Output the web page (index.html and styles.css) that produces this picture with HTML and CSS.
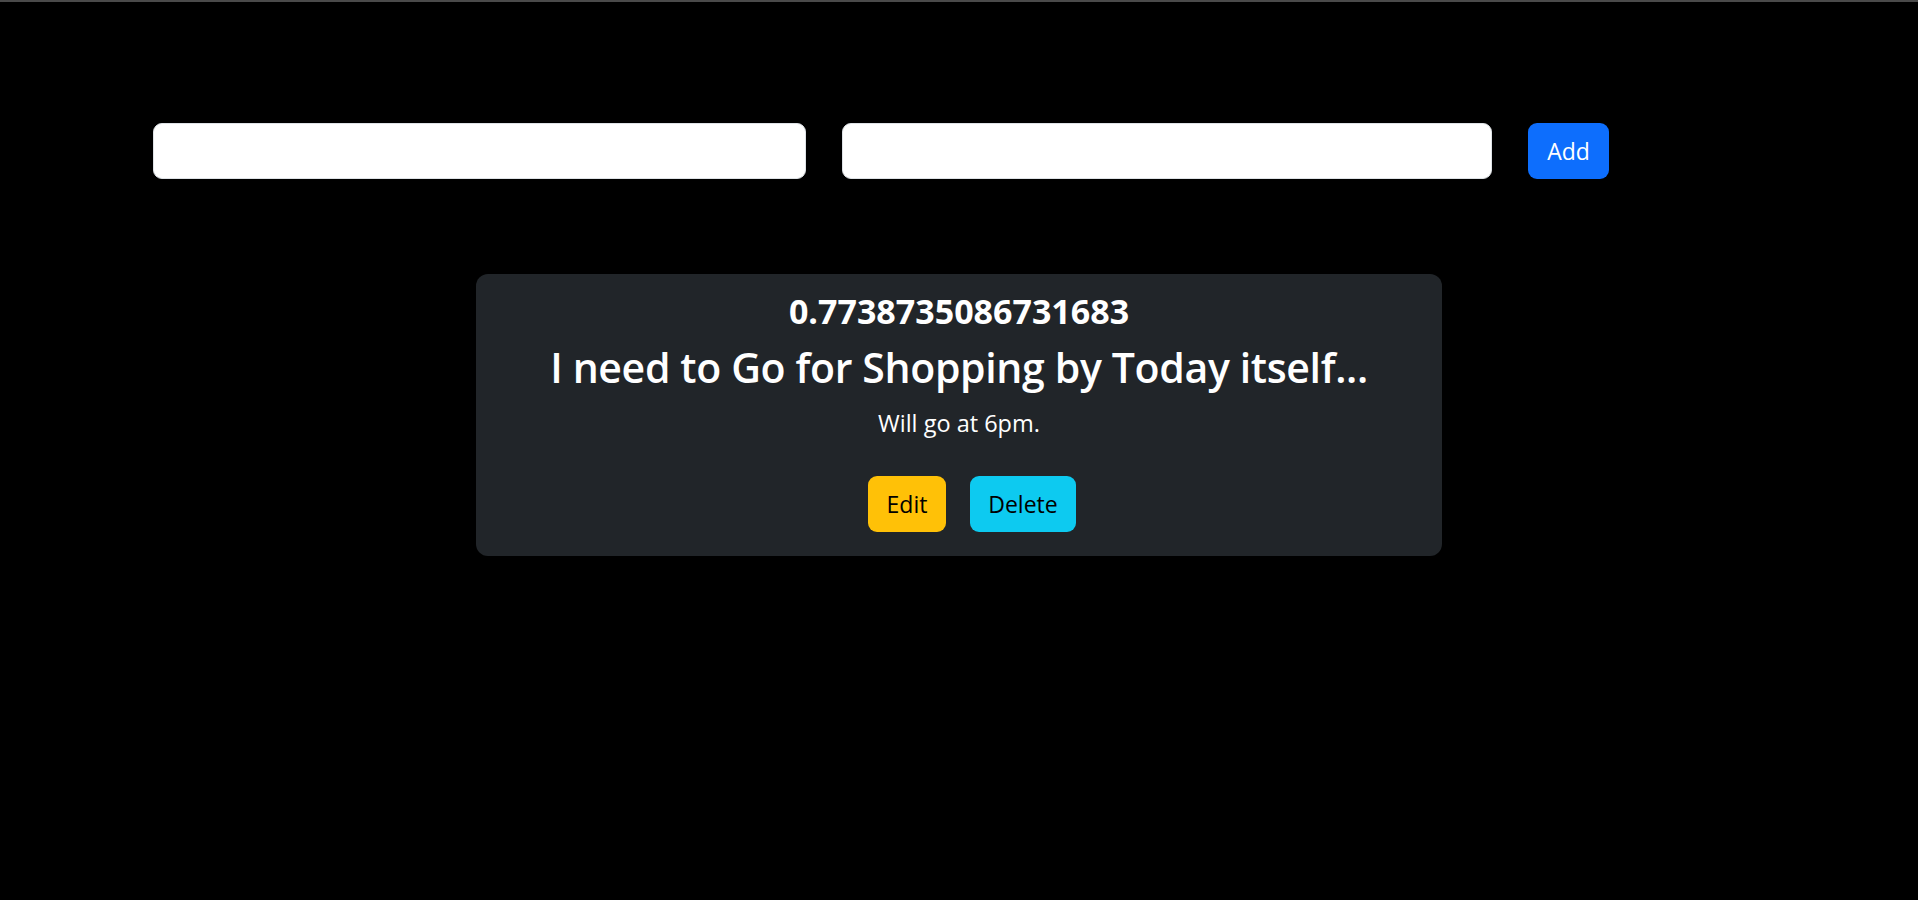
FILE: index.html
```html
<!DOCTYPE html>
<html lang="en">
<head>
<meta charset="utf-8">
<title>Todo</title>
<link rel="stylesheet" href="styles.css">
</head>
<body>
<div class="topline"></div>
<form class="add-form">
  <input class="field field-title" type="text">
  <input class="field field-desc" type="text">
  <button class="btn btn-primary" type="button">Add</button>
</form>
<div class="card">
  <h4 class="card-id">0.7738735086731683</h4>
  <h3 class="card-title">I need to Go for Shopping by Today itself...</h3>
  <p class="card-desc">Will go at 6pm.</p>
  <div class="actions">
    <button class="btn btn-warning" type="button">Edit</button>
    <button class="btn btn-info" type="button">Delete</button>
  </div>
</div>
</body>
</html>
```
FILE: styles.css
```css
html, body {
  margin: 0;
  padding: 0;
  background: #000;
  height: 100%;
}
body {
  font-family: "Open Sans", "Noto Sans", sans-serif;
  color: #fff;
}
.topline {
  height: 2px;
  background: #4a4a4a;
}
.add-form {
  display: flex;
  align-items: center;
  gap: 36px;
  padding: 121px 0 0 153px;
}
.field {
  box-sizing: border-box;
  height: 56px;
  border: 1.5px solid #dee2e6;
  border-radius: 9px;
  background: #fff;
  padding: 9px 18px;
  font-size: 24px;
  font-family: inherit;
  outline: none;
}
.field-title { width: 653px; }
.field-desc { width: 650px; }
.btn {
  box-sizing: border-box;
  height: 56px;
  border: none;
  border-radius: 9px;
  font-family: inherit;
  font-size: 23px;
  padding: 0 12px;
  cursor: pointer;
}
.btn-primary {
  width: 81px;
  background: #0d6efd;
  color: #fff;
}
.card {
  box-sizing: border-box;
  width: 966px;
  margin: 95px auto 0;
  background: #212529;
  border-radius: 12px;
  padding: 17px 24px 24px;
  text-align: center;
}
.card-id {
  margin: 0;
  font-size: 34px;
  font-weight: 700;
  line-height: 1.2;
  letter-spacing: 0;
}
.card-title {
  margin: 11px 0 0;
  font-size: 41px;
  font-weight: 600;
  line-height: 1.2;
  letter-spacing: -0.35px;
}
.card-desc {
  margin: 13px 0 0;
  font-size: 23.5px;
  line-height: 36px;
}
.actions {
  display: flex;
  justify-content: center;
  gap: 24px;
  margin-top: 35px;
  padding-left: 26px;
}
.btn-warning {
  width: 78px;
  background: #ffc107;
  color: #000;
}
.btn-info {
  width: 106px;
  background: #0dcaf0;
  color: #000;
}
```
